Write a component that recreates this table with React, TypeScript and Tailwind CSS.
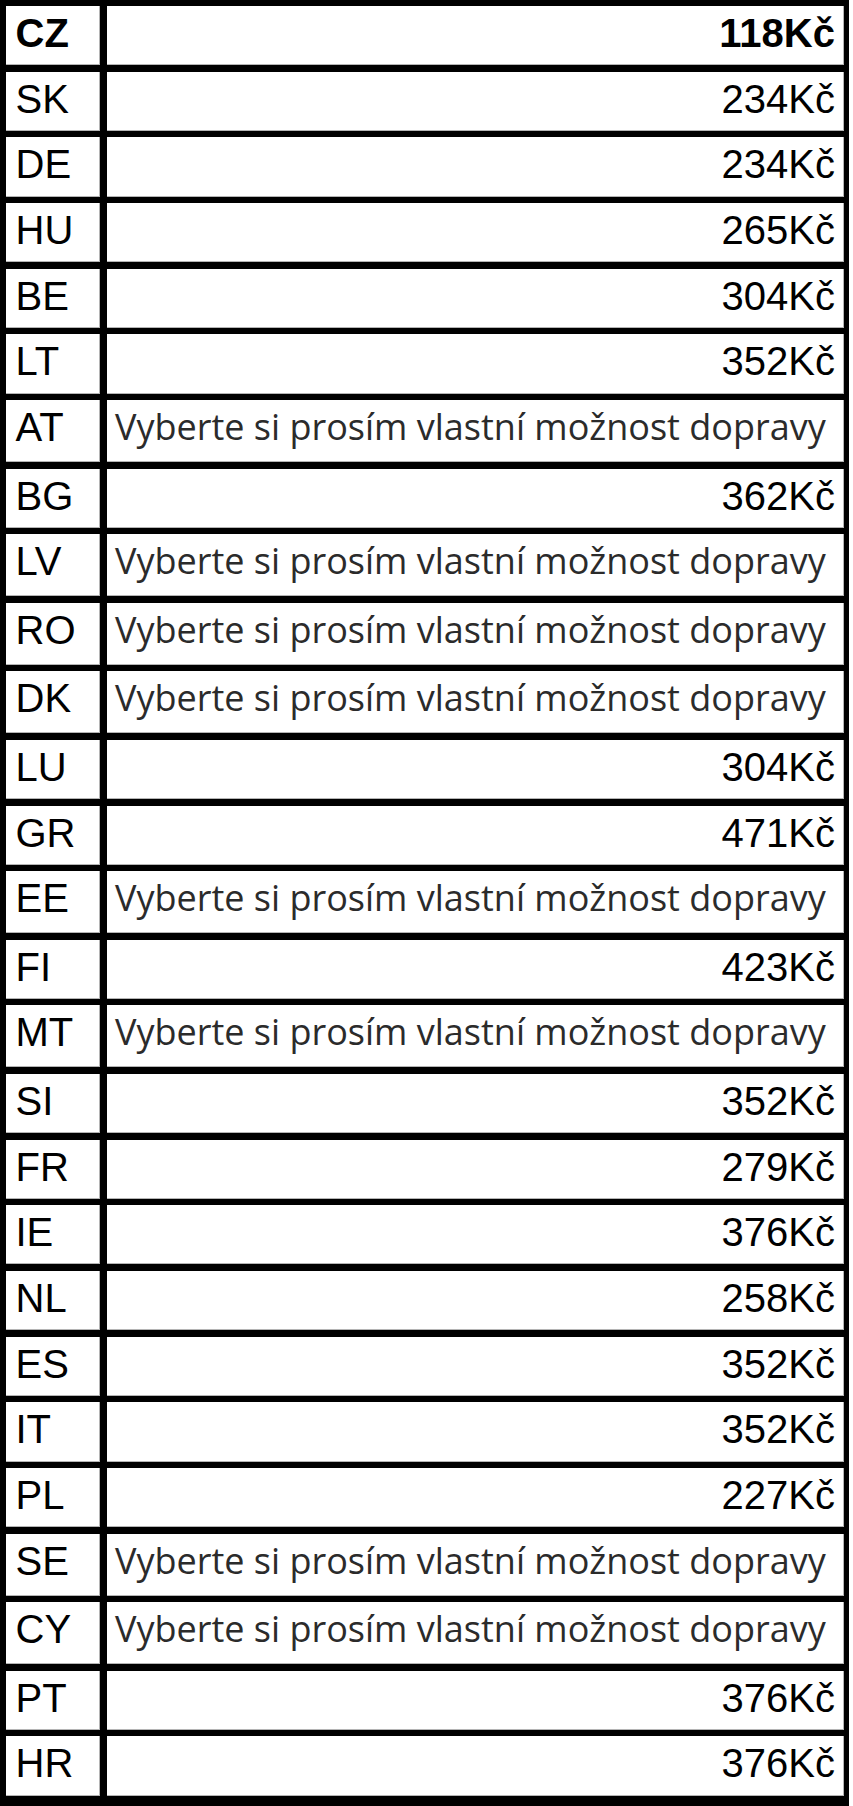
import React from "react";

type Row = { code: string; price?: string; bold?: boolean };

const rows: Row[] = [
  { code: "CZ", price: "118Kč", bold: true },
  { code: "SK", price: "234Kč" },
  { code: "DE", price: "234Kč" },
  { code: "HU", price: "265Kč" },
  { code: "BE", price: "304Kč" },
  { code: "LT", price: "352Kč" },
  { code: "AT" },
  { code: "BG", price: "362Kč" },
  { code: "LV" },
  { code: "RO" },
  { code: "DK" },
  { code: "LU", price: "304Kč" },
  { code: "GR", price: "471Kč" },
  { code: "EE" },
  { code: "FI", price: "423Kč" },
  { code: "MT" },
  { code: "SI", price: "352Kč" },
  { code: "FR", price: "279Kč" },
  { code: "IE", price: "376Kč" },
  { code: "NL", price: "258Kč" },
  { code: "ES", price: "352Kč" },
  { code: "IT", price: "352Kč" },
  { code: "PL", price: "227Kč" },
  { code: "SE" },
  { code: "CY" },
  { code: "PT", price: "376Kč" },
  { code: "HR", price: "376Kč" },
];

export default function App() {
  return (
    <div className="w-[853px] bg-white">
      <div className="w-[849px] bg-black pt-[6px] pl-[6px] pr-[5px] pb-[10px] flex flex-col gap-[6.5px]">
        {rows.map((r) => {
          const custom = !r.price;
          return (
            <div
              key={r.code}
              className={`flex gap-[6.5px] ${custom ? "h-[62px]" : "h-[59.2px]"}`}
            >
              <div
                className={`w-[94px] shrink-0 bg-white border-r border-b border-[#b4b4b4] pl-[9.5px] pt-[4px] font-['Liberation_Sans',Arial,sans-serif] text-[40px] leading-[46px] text-black ${
                  r.bold ? "font-bold" : "font-normal"
                }`}
              >
                {r.code}
              </div>
              {custom ? (
                <div className="flex-1 bg-white border-r border-b border-[#b4b4b4] pl-[8.5px] pt-[3px] font-['Open_Sans','Noto_Sans',sans-serif] text-[36px] leading-[48px] text-[#2b2b2b] whitespace-nowrap overflow-hidden">
                  Vyberte si prosím vlastní možnost dopravy
                </div>
              ) : (
                <div
                  className={`flex-1 bg-white border-r border-b border-[#b4b4b4] pr-[8px] pt-[4px] text-right font-['Liberation_Sans',Arial,sans-serif] text-[40px] leading-[46px] text-black ${
                    r.bold ? "font-bold" : "font-normal"
                  }`}
                >
                  {r.price}
                </div>
              )}
            </div>
          );
        })}
      </div>
    </div>
  );
}
